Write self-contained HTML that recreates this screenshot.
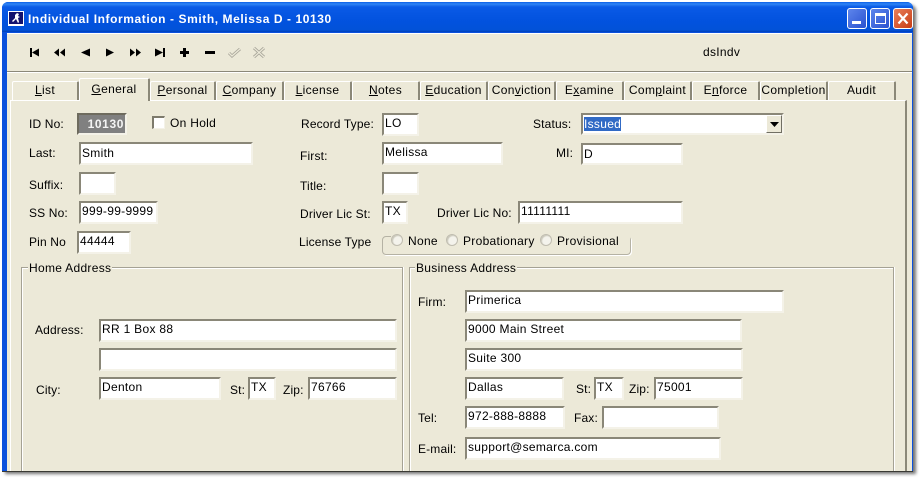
<!DOCTYPE html>
<html><head><meta charset="utf-8"><style>
html,body{margin:0;padding:0;width:921px;height:479px;overflow:hidden;background:#fff}
body{position:relative;font:12px/14px "Liberation Sans",Arial,sans-serif;color:#000}
#win{position:absolute;left:2px;top:2px;width:911px;height:469px;background:#0a50dc;border-radius:6px 6px 0 0;box-shadow:3px 3px 3px rgba(0,0,0,.55)}
#tb{position:absolute;left:2px;top:2px;width:911px;height:30px;border-radius:6px 6px 0 0;background:linear-gradient(#0a5fe8 0,#2f84f4 2px,#0a5ae6 5px,#0252de 20px,#0252d8 28px,#0040b8 30px)}
#client{position:absolute;left:7px;top:33px;width:905px;height:438px;background:#ece9d8;border-top:1px solid #fff;box-sizing:border-box}
.a{position:absolute;white-space:nowrap;letter-spacing:.15px}
.i{position:absolute;background:#fff;box-sizing:border-box;border-top:2px solid #8a8778;border-left:2px solid #8a8778;border-right:2px solid #f4f2e8;border-bottom:2px solid #f4f2e8;padding:1px 0 0 1px;line-height:14px;white-space:nowrap;letter-spacing:.3px}
.t{position:absolute;top:81px;height:19px;box-sizing:border-box;background:#ece9d8;border-top:1px solid #fff;border-left:1px solid #fff;border-right:2px solid #8b8878;text-align:center;line-height:17px;letter-spacing:.35px;white-space:nowrap;border-radius:2px 2px 0 0;overflow:visible}
.g{position:absolute;top:267px;height:205px;box-sizing:border-box;border:1px solid #a5a294;border-bottom:none;box-shadow:inset 1px 1px 0 #fff,1px 0 0 #fff}
.gl{position:absolute;top:261px;background:#ece9d8;padding:0 1px;letter-spacing:.3px;line-height:14px;white-space:nowrap}
.r{position:absolute;top:234px;width:12px;height:12px;border-radius:50%;background:#f4f3ec;border:1px solid #c0bdb0;box-sizing:border-box;box-shadow:inset 1px 1px 1px #c8c6b8}
u{text-decoration:underline}
svg{position:absolute}
</style></head><body>
<div id="win"></div>
<div id="tb"></div>
<svg style="left:8px;top:11px" width="16" height="15" viewBox="0 0 16 15"><rect width="16" height="15" fill="#fff"/><rect x="1" y="1" width="14" height="12" fill="#12126e"/><path d="M9 2l2 1-1 2 2 1-2 1 1 4-1 1-2-4-3 3-1-1 3-3 0-3z" fill="#fff"/></svg>
<div class="a" style="left:28px;top:11px;color:#fff;font-weight:bold;font-size:12px;line-height:16px;letter-spacing:.58px">Individual Information - Smith, Melissa D - 10130</div>

<div style="position:absolute;left:847px;top:8px;width:20px;height:21px;box-sizing:border-box;border:1px solid #fff;border-radius:3px;background:linear-gradient(135deg,#5d85ec,#2a52d0)"></div>
<div style="position:absolute;left:852px;top:21px;width:9px;height:3px;background:#fff"></div>
<div style="position:absolute;left:870px;top:8px;width:20px;height:21px;box-sizing:border-box;border:1px solid #fff;border-radius:3px;background:linear-gradient(135deg,#5d85ec,#2a52d0)"></div>
<div style="position:absolute;left:875px;top:13px;width:11px;height:11px;box-sizing:border-box;border:1px solid #fff;border-top:3px solid #fff"></div>
<div style="position:absolute;left:893px;top:8px;width:20px;height:21px;box-sizing:border-box;border:1px solid #fff;border-radius:3px;background:linear-gradient(135deg,#e8805c,#c83c14)"></div>
<svg style="left:893px;top:8px" width="20" height="21"><path d="M5.500 5.500L14.500 15.500M14.500 5.500L5.500 15.500" stroke="#fff" stroke-width="2.200"/></svg>

<div id="client"></div>
<div style="position:absolute;left:7px;top:71px;width:905px;height:1px;background:#8b8878"></div>
<div style="position:absolute;left:7px;top:72px;width:905px;height:1px;background:#fff"></div>

<svg style="left:28px;top:46px" width="240" height="13" viewBox="0 0 240 13" fill="#000">
<path d="M2 2h2v9H2zM4 6.500L11 2.500v8z"/>
<path d="M26 6.500L31 2.500v8zM32 6.500L37 2.500v8z"/>
<path d="M53 6.500L62 2.500v8z"/>
<path d="M78 2.500L86 6.500 78 10.500z"/>
<path d="M102 2.500L107 6.500 102 10.500zM108 2.500L113 6.500 108 10.500z"/>
<path d="M127 2.500L135 6.500 127 10.500zM135 2h2v9H135z"/>
<path d="M152 5h3V2h3v3h3v3h-3v3h-3V8h-3z"/>
<rect x="177" y="5" width="10" height="3"/>
<path d="M201 7l3 3 8-7" fill="none" stroke="#a8a69a" stroke-width="3"/>
<path d="M201 7l3 3 8-7" fill="none" stroke="#ece9d8" stroke-width="1.300"/>
<path d="M226 2l10 9M236 2l-10 9" fill="none" stroke="#a8a69a" stroke-width="3"/>
<path d="M226 2l10 9M236 2l-10 9" fill="none" stroke="#ece9d8" stroke-width="1.200"/>
</svg>
<div class="a" style="left:703px;top:45px;letter-spacing:.3px">dsIndv</div>

<div style="position:absolute;left:10px;top:100px;width:897px;height:372px;box-sizing:border-box;border-top:1px solid #fff;border-left:1px solid #fff;border-right:2px solid #8b8878"></div>

<div class="t" style="left:12px;width:67px"><u>L</u>ist</div>
<div class="t" style="left:79px;top:78px;width:71px;height:23px;line-height:20px;z-index:2;border-right:2px solid #8b8878"><u>G</u>eneral</div>
<div class="t" style="left:150px;width:66px"><u>P</u>ersonal</div>
<div class="t" style="left:216px;width:68px"><u>C</u>ompany</div>
<div class="t" style="left:284px;width:68px"><u>L</u>icense</div>
<div class="t" style="left:352px;width:68px"><u>N</u>otes</div>
<div class="t" style="left:420px;width:68px"><u>E</u>ducation</div>
<div class="t" style="left:488px;width:68px">Con<u>v</u>iction</div>
<div class="t" style="left:556px;width:68px">E<u>x</u>amine</div>
<div class="t" style="left:624px;width:68px">Com<u>p</u>laint</div>
<div class="t" style="left:692px;width:68px">E<u>n</u>force</div>
<div class="t" style="left:760px;width:68px">Completion</div>
<div class="t" style="left:828px;width:68px">Audit</div>

<div class="a" style="left:29px;top:117px">ID No:</div>
<div style="position:absolute;left:77px;top:113px;width:50px;height:22px;box-sizing:border-box;background:#808080;border-top:2px solid #6e6b5e;border-left:2px solid #6e6b5e;border-right:2px solid #f4f2e8;border-bottom:2px solid #f4f2e8;color:#f4f4f4;font-weight:bold;text-align:right;padding:2px 1px 0 0;letter-spacing:.6px">10130</div>
<div style="position:absolute;left:152px;top:116px;width:13px;height:13px;box-sizing:border-box;background:#fff;border-top:2px solid #7d7a6c;border-left:2px solid #7d7a6c;border-right:1px solid #f4f2e8;border-bottom:1px solid #f4f2e8"></div>
<div class="a" style="left:170px;top:116px;letter-spacing:.3px">On Hold</div>

<div class="a" style="left:29px;top:146px">Last:</div>
<div class="i" style="left:79px;top:142px;width:174px;height:23px;padding-top:2px">Smith</div>
<div class="a" style="left:29px;top:178px">Suffix:</div>
<div class="i" style="left:79px;top:172px;width:37px;height:23px"></div>
<div class="a" style="left:29px;top:206px">SS No:</div>
<div class="i" style="left:79px;top:201px;width:79px;height:23px">999-99-9999</div>
<div class="a" style="left:29px;top:235px">Pin No</div>
<div class="i" style="left:77px;top:231px;width:54px;height:23px">44444</div>

<div class="a" style="left:301px;top:117px">Record Type:</div>
<div class="i" style="left:382px;top:113px;width:37px;height:23px">LO</div>
<div class="a" style="left:300px;top:149px">First:</div>
<div class="i" style="left:382px;top:142px;width:121px;height:23px">Melissa</div>
<div class="a" style="left:300px;top:179px">Title:</div>
<div class="i" style="left:382px;top:172px;width:37px;height:23px"></div>
<div class="a" style="left:300px;top:207px">Driver Lic St:</div>
<div class="i" style="left:382px;top:201px;width:26px;height:23px">TX</div>
<div class="a" style="left:437px;top:206px">Driver Lic No:</div>
<div class="i" style="left:518px;top:201px;width:165px;height:23px">11111111</div>
<div class="a" style="left:299px;top:235px">License Type</div>

<div class="a" style="left:533px;top:117px">Status:</div>
<div class="i" style="left:581px;top:113px;width:203px;height:22px;padding:2px 0 0 1px"><span style="background:#316ac5;color:#fff">Issued</span></div>
<div style="position:absolute;left:766px;top:115px;width:16px;height:18px;box-sizing:border-box;background:#ece9d8;border-top:1px solid #fff;border-left:1px solid #fff;border-right:1px solid #716f64;border-bottom:1px solid #716f64"></div>
<svg style="left:770px;top:122px" width="9" height="5"><path d="M0 0h9L4.500 5z" fill="#000"/></svg>
<div class="a" style="left:556px;top:146px">MI:</div>
<div class="i" style="left:581px;top:143px;width:102px;height:22px;padding-top:2px">D</div>

<div style="position:absolute;left:382px;top:236px;width:249px;height:19px;box-sizing:border-box;border:1px solid #b5b2a4;border-radius:4px;box-shadow:1px 1px 0 #fff"></div>
<div class="gl" style="left:391px;top:234px;width:239px;height:12px;padding:0"></div>
<div class="r" style="left:391px"></div>
<div class="a" style="left:408px;top:234px;letter-spacing:.3px">None</div>
<div class="r" style="left:446px"></div>
<div class="a" style="left:463px;top:234px;letter-spacing:.3px">Probationary</div>
<div class="r" style="left:540px"></div>
<div class="a" style="left:557px;top:234px;letter-spacing:.3px">Provisional</div>

<div class="g" style="left:21px;width:382px"></div>
<div class="gl" style="left:28px">Home Address</div>
<div class="g" style="left:409px;width:485px"></div>
<div class="gl" style="left:415px">Business Address</div>

<div class="a" style="left:35px;top:323px">Address:</div>
<div class="i" style="left:99px;top:319px;width:298px;height:23px">RR 1 Box 88</div>
<div class="i" style="left:99px;top:348px;width:298px;height:23px"></div>
<div class="a" style="left:36px;top:383px">City:</div>
<div class="i" style="left:99px;top:377px;width:122px;height:23px">Denton</div>
<div class="a" style="left:230px;top:383px">St:</div>
<div class="i" style="left:248px;top:377px;width:28px;height:23px">TX</div>
<div class="a" style="left:283px;top:383px">Zip:</div>
<div class="i" style="left:308px;top:377px;width:89px;height:23px">76766</div>

<div class="a" style="left:418px;top:295px">Firm:</div>
<div class="i" style="left:465px;top:290px;width:319px;height:23px">Primerica</div>
<div class="i" style="left:465px;top:319px;width:277px;height:23px">9000 Main Street</div>
<div class="i" style="left:465px;top:348px;width:278px;height:23px">Suite 300</div>
<div class="i" style="left:465px;top:377px;width:99px;height:23px">Dallas</div>
<div class="a" style="left:576px;top:382px">St:</div>
<div class="i" style="left:594px;top:377px;width:30px;height:23px">TX</div>
<div class="a" style="left:629px;top:382px">Zip:</div>
<div class="i" style="left:654px;top:377px;width:89px;height:23px">75001</div>
<div class="a" style="left:418px;top:411px">Tel:</div>
<div class="i" style="left:465px;top:406px;width:100px;height:23px">972-888-8888</div>
<div class="a" style="left:574px;top:411px">Fax:</div>
<div class="i" style="left:602px;top:406px;width:117px;height:23px"></div>
<div class="a" style="left:418px;top:442px">E-mail:</div>
<div class="i" style="left:465px;top:437px;width:256px;height:23px">support@semarca.com</div>

<div style="position:absolute;left:2px;top:471px;width:911px;height:1px;background:#3a3a34"></div>
</body></html>
